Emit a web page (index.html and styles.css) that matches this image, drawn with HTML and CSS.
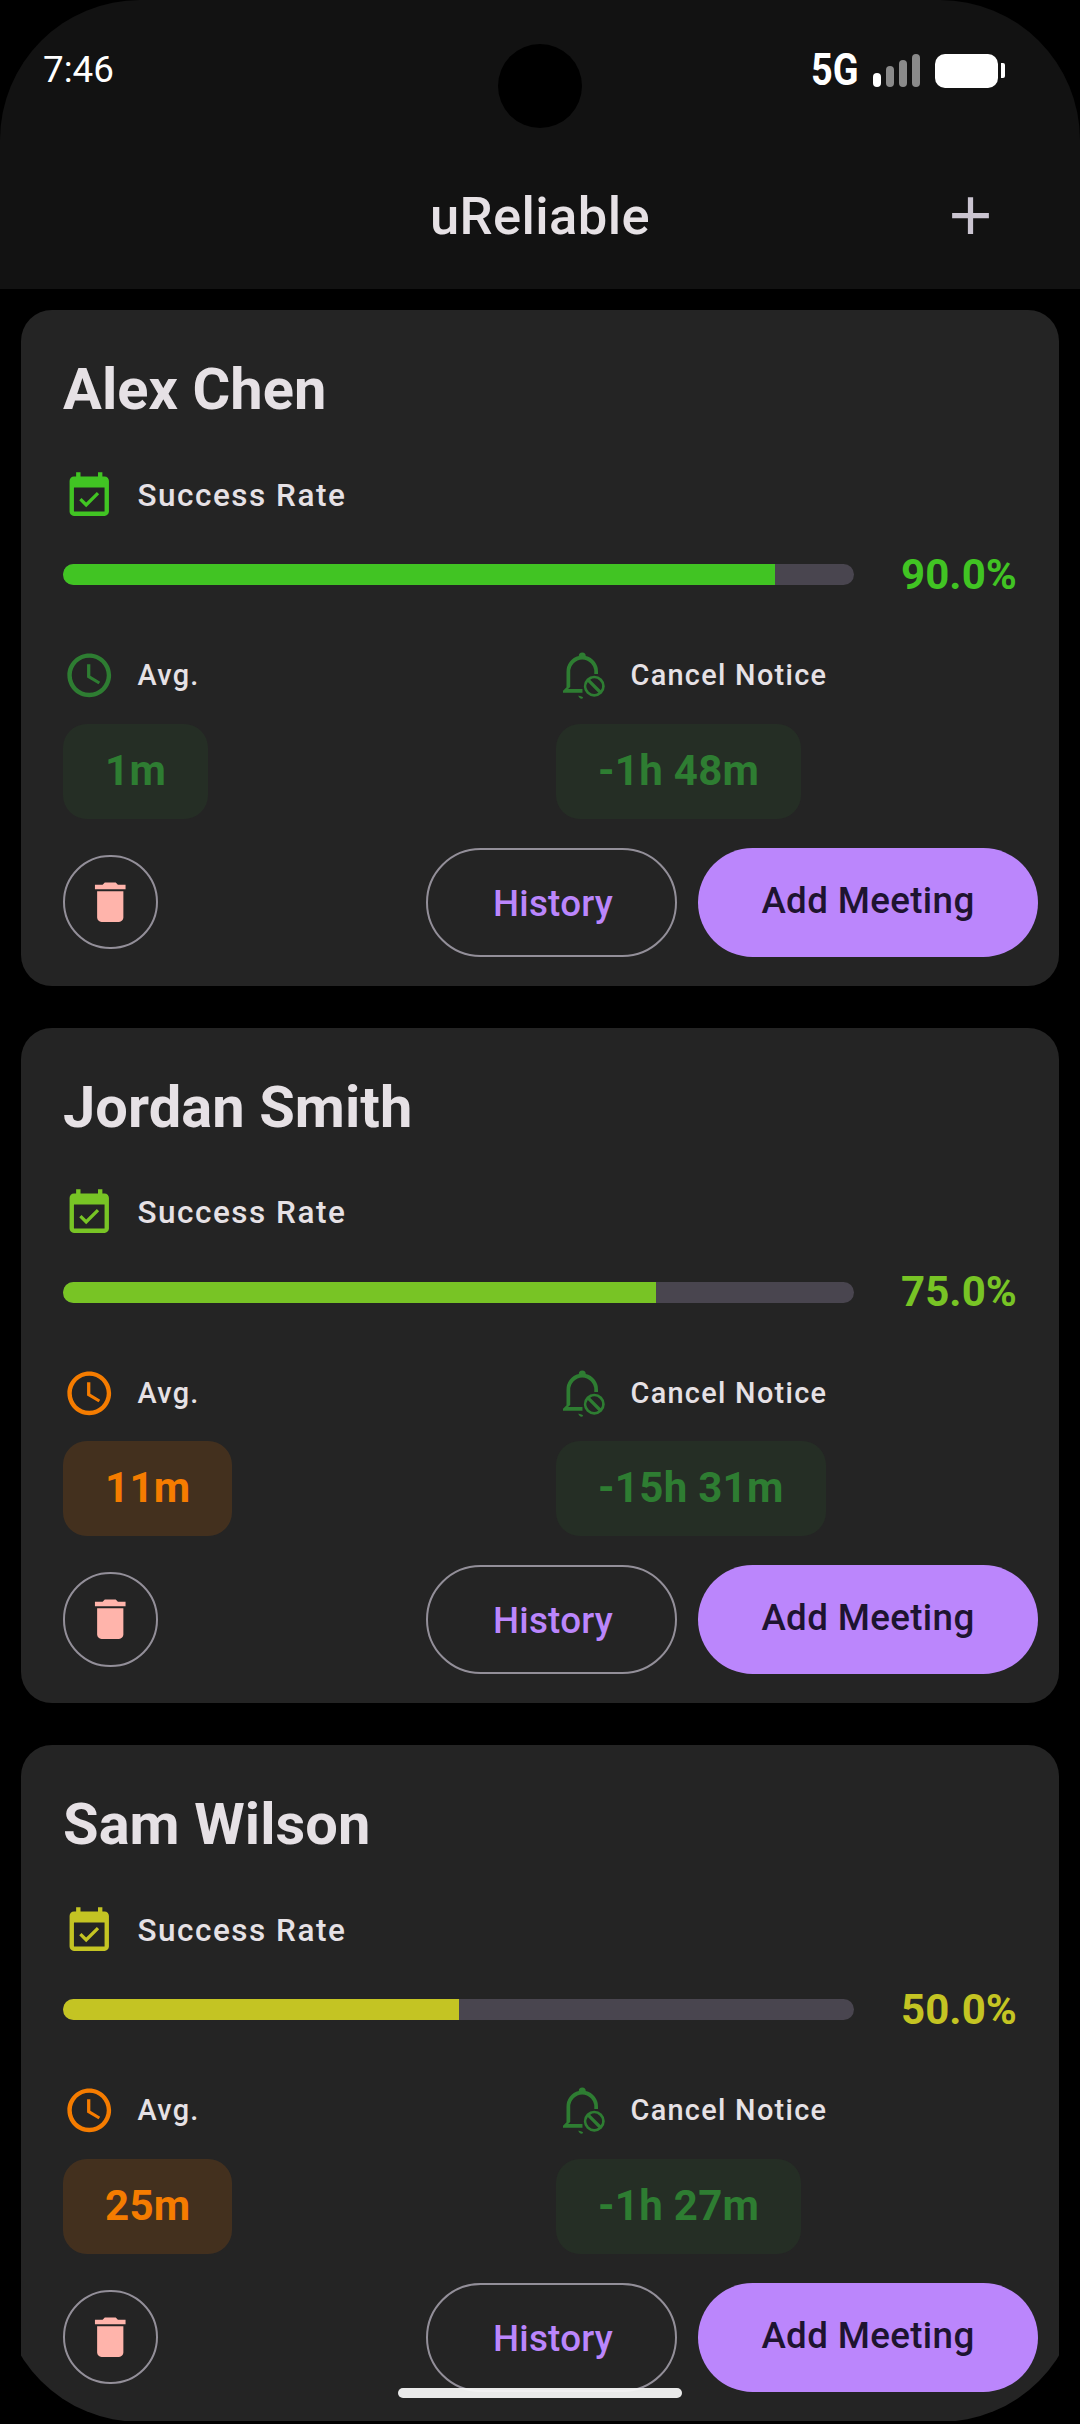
FILE: index.html
```html
<!DOCTYPE html>
<html lang="en">
<head>
<meta charset="utf-8">
<title>uReliable</title>
<link rel="stylesheet" href="styles.css">
</head>
<body>
<svg class="defs" width="0" height="0" aria-hidden="true">
  <symbol id="i-cal" viewBox="0 0 24 24"><path d="M16.53 11.06L15.47 10l-4.88 4.88-2.12-2.12-1.06 1.06L10.59 17l5.94-5.94zM19 3h-1V1h-2v2H8V1H6v2H5c-1.11 0-1.99.9-1.99 2L3 19c0 1.1.89 2 2 2h14c1.1 0 2-.9 2-2V5c0-1.1-.9-2-2-2zm0 16H5V8h14v11z"/></symbol>
  <symbol id="i-clock" viewBox="0 0 24 24"><path d="M11.99 2C6.47 2 2 6.48 2 12s4.47 10 9.99 10C17.52 22 22 17.52 22 12S17.52 2 11.99 2zM12 20c-4.42 0-8-3.58-8-8s3.58-8 8-8 8 3.58 8 8-3.58 8-8 8zm.5-13H11v6l5.25 3.15.75-1.23-4.5-2.67z"/></symbol>
  <symbol id="i-bell" viewBox="0 0 24 24"><path d="M12 1.6a1.6 1.6 0 0 1 1.6 1.6 7.3 7.3 0 0 1 5.6 7.3v.9h-1.7v-.9A5.6 5.6 0 0 0 12 4.8a5.6 5.6 0 0 0-5.5 5.7v6.9l-1 .9h6.6v1.7H3.2v-.9l1.6-1.6v-7a7.3 7.3 0 0 1 5.6-7.3A1.6 1.6 0 0 1 12 1.6z"/><path d="M10.2 21.2c.9.3 1.6.3 2.2.9l-.4.6c-1 .1-1.6-.6-1.8-1.5z"/><path fill-rule="evenodd" d="M17.5 12.2a4.8 4.8 0 1 1 0 9.6 4.8 4.8 0 0 1 0-9.6zM14.55 15.11A3.5 3.5 0 0 0 19.39 19.95zM15.61 14.05A3.5 3.5 0 0 1 20.45 18.89z"/></symbol>
  <symbol id="i-del" viewBox="0 0 24 24"><path d="M6 19c0 1.1.9 2 2 2h8c1.1 0 2-.9 2-2V7H6v12zM19 4h-3.5l-1-1h-5l-1 1H5v2h14V4z"/></symbol>
</svg>
<div class="screen">
  <header class="appbar">
    <div class="status">
      <span class="time">7:46</span>
      <div class="status-right">
        <span class="net">5G</span>
        <div class="signal"><i class="s1"></i><i class="s2"></i><i class="s3"></i><i class="s4"></i></div>
        <div class="battery"></div>
        <div class="batcap"></div>
      </div>
    </div>
    <div class="titlebar">
      <h1 class="title">uReliable</h1>
      <svg class="add" viewBox="0 0 24 24"><path d="M19 13h-6v6h-2v-6H5v-2h6V5h2v6h6v2z"/></svg>
    </div>
  </header>
  <main class="list">
    <section class="card">
      <h2 class="name">Alex Chen</h2>
      <div class="label-row rate-row c90"><svg class="ico"><use href="#i-cal"/></svg><span class="label">Success Rate</span></div>
      <div class="progress-row c90">
        <div class="track"><div class="fill" style="width:90%"></div></div>
        <span class="pct">90.0%</span>
      </div>
      <div class="metrics">
        <div class="metric good">
          <div class="label-row"><svg class="ico"><use href="#i-clock"/></svg><span class="label small">Avg.</span></div>
          <div class="chip">1m</div>
        </div>
        <div class="metric good">
          <div class="label-row"><svg class="ico"><use href="#i-bell"/></svg><span class="label small">Cancel Notice</span></div>
          <div class="chip">-1h 48m</div>
        </div>
      </div>
      <div class="actions">
        <button class="delete"><svg class="ico"><use href="#i-del"/></svg></button>
        <button class="history">History</button>
        <button class="addmeet">Add Meeting</button>
      </div>
    </section>
    <section class="card">
      <h2 class="name">Jordan Smith</h2>
      <div class="label-row rate-row c75"><svg class="ico"><use href="#i-cal"/></svg><span class="label">Success Rate</span></div>
      <div class="progress-row c75">
        <div class="track"><div class="fill" style="width:75%"></div></div>
        <span class="pct">75.0%</span>
      </div>
      <div class="metrics">
        <div class="metric warn">
          <div class="label-row"><svg class="ico"><use href="#i-clock"/></svg><span class="label small">Avg.</span></div>
          <div class="chip">11m</div>
        </div>
        <div class="metric good">
          <div class="label-row"><svg class="ico"><use href="#i-bell"/></svg><span class="label small">Cancel Notice</span></div>
          <div class="chip">-15h 31m</div>
        </div>
      </div>
      <div class="actions">
        <button class="delete"><svg class="ico"><use href="#i-del"/></svg></button>
        <button class="history">History</button>
        <button class="addmeet">Add Meeting</button>
      </div>
    </section>
    <section class="card">
      <h2 class="name">Sam Wilson</h2>
      <div class="label-row rate-row c50"><svg class="ico"><use href="#i-cal"/></svg><span class="label">Success Rate</span></div>
      <div class="progress-row c50">
        <div class="track"><div class="fill" style="width:50%"></div></div>
        <span class="pct">50.0%</span>
      </div>
      <div class="metrics">
        <div class="metric warn">
          <div class="label-row"><svg class="ico"><use href="#i-clock"/></svg><span class="label small">Avg.</span></div>
          <div class="chip">25m</div>
        </div>
        <div class="metric good">
          <div class="label-row"><svg class="ico"><use href="#i-bell"/></svg><span class="label small">Cancel Notice</span></div>
          <div class="chip">-1h 27m</div>
        </div>
      </div>
      <div class="actions">
        <button class="delete"><svg class="ico"><use href="#i-del"/></svg></button>
        <button class="history">History</button>
        <button class="addmeet">Add Meeting</button>
      </div>
    </section>
  </main>
  <div class="camera"></div>
  <div class="home"></div>
</div>
</body>
</html>
```
FILE: styles.css
```css
* { box-sizing: border-box; }
html, body { margin: 0; padding: 0; background: #000; height: 2424px; overflow: hidden; }
body { font-family: Roboto, "Noto Sans", sans-serif; color: #e6e1e5; }
.defs { position: absolute; }
.screen { position: relative; height: 2422px; background: #000; border-radius: 140px; overflow: hidden; }

.appbar { height: 289px; background: #121212; }
.status { display: flex; justify-content: space-between; height: 108px; padding: 48px 75px 0 43px; }
.time { font-size: 36.75px; line-height: 44px; color: #fff; }
.status-right { display: flex; align-items: flex-start; }
.net { font-weight: 700; font-size: 44px; line-height: 44px; margin: 0 0 0 -1px; color: #fff; width: 47px; transform: scaleX(.86); transform-origin: left center; }
.signal { display: flex; align-items: flex-end; gap: 5px; height: 33px; margin: 6px 0 0 15px; }
.signal i { display: block; width: 8px; background: #8a8a8a; border-radius: 4px; }
.signal .s1 { height: 14px; background: #fff; }
.signal .s2 { height: 21px; }
.signal .s3 { height: 27px; }
.signal .s4 { height: 33px; }
.battery { width: 63px; height: 34px; margin: 6px 0 0 15px; background: #fff; border-radius: 10px; }
.batcap { width: 4px; height: 15px; margin: 15px 0 0 3px; background: #fff; border-radius: 0 2px 2px 0; }

.titlebar { position: relative; display: flex; justify-content: center; align-items: center; height: 63px; margin-top: 76px; }
.title { margin: 2px 0 0; font-size: 52.5px; line-height: 61px; font-weight: 500; letter-spacing: .4px; color: #e6e1e5; }
.add { position: absolute; left: 939px; top: 0; width: 63px; height: 63px; fill: #cac4d0; }

.list { display: flex; flex-direction: column; gap: 42px; padding: 21px 21px 0; }
.card { height: 675.5px; flex: none; padding: 43px 42px 0; background: #242424; border-radius: 31px; }
.name { margin: 0; font-size: 57.75px; line-height: 72px; font-weight: 700; letter-spacing: .08px; color: #e6e1e5; }
.label-row { display: flex; align-items: center; gap: 21px; height: 52.5px; }
.rate-row { margin-top: 44.5px; }
.ico { width: 52.5px; height: 52.5px; flex: none; fill: currentColor; }
.label { margin-left: 1px; font-size: 31.5px; font-weight: 500; letter-spacing: 1.5px; color: #e6e1e5; line-height: 40px; }
.small { font-size: 28.875px; letter-spacing: 1.3px; }

.c90 { color: #41c423; }
.c75 { color: #78c425; }
.c50 { color: #c4c423; }
.progress-row { display: flex; align-items: center; height: 49px; margin-top: 28px; }
.track { width: 791px; height: 21px; background: #49454f; border-radius: 10.5px; overflow: hidden; }
.fill { height: 100%; background: currentColor; }
.pct { margin: 0 0 1px auto; font-size: 42px; line-height: 49px; font-weight: 700; letter-spacing: .1px; }

.metrics { display: grid; grid-template-columns: 493px 1fr; margin-top: 50px; }
.metric { display: flex; flex-direction: column; align-items: flex-start; }
.good { color: #2e7d32; }
.warn { color: #f57c00; }
.chip { height: 95px; margin-top: 22px; padding: 0 42px; border-radius: 24px; font-size: 42px; line-height: 93px; font-weight: 700; letter-spacing: .3px; }
.good .chip { background: rgba(46, 125, 50, .12); }
.warn .chip { background: rgba(245, 124, 0, .15); }

.actions { display: flex; align-items: center; gap: 21px; height: 109px; margin: 29px -21px 0 0; }
.delete { width: 94.5px; height: 94.5px; padding: 0; margin-right: auto; display: flex; align-items: center; justify-content: center; background: none; border: 2.6px solid #938f99; border-radius: 50%; color: #ffb4ab; }
.history, .addmeet { height: 109px; padding: 0; font-family: inherit; font-size: 36.75px; font-weight: 500; letter-spacing: .26px; border-radius: 54.5px; }
.history { width: 251px; background: none; border: 2.6px solid #938f99; color: #bb86fc; padding: 2px 0 0 3px; }
.addmeet { width: 340px; background: #bb86fc; border: none; color: #1e1430; padding-bottom: 4px; letter-spacing: .35px; }

.camera { position: absolute; left: 498px; top: 44px; width: 84px; height: 84px; border-radius: 50%; background: #000; }
.home { position: absolute; left: 398px; top: 2388px; width: 284px; height: 10px; border-radius: 5px; background: rgba(245, 245, 245, .95); }
```
